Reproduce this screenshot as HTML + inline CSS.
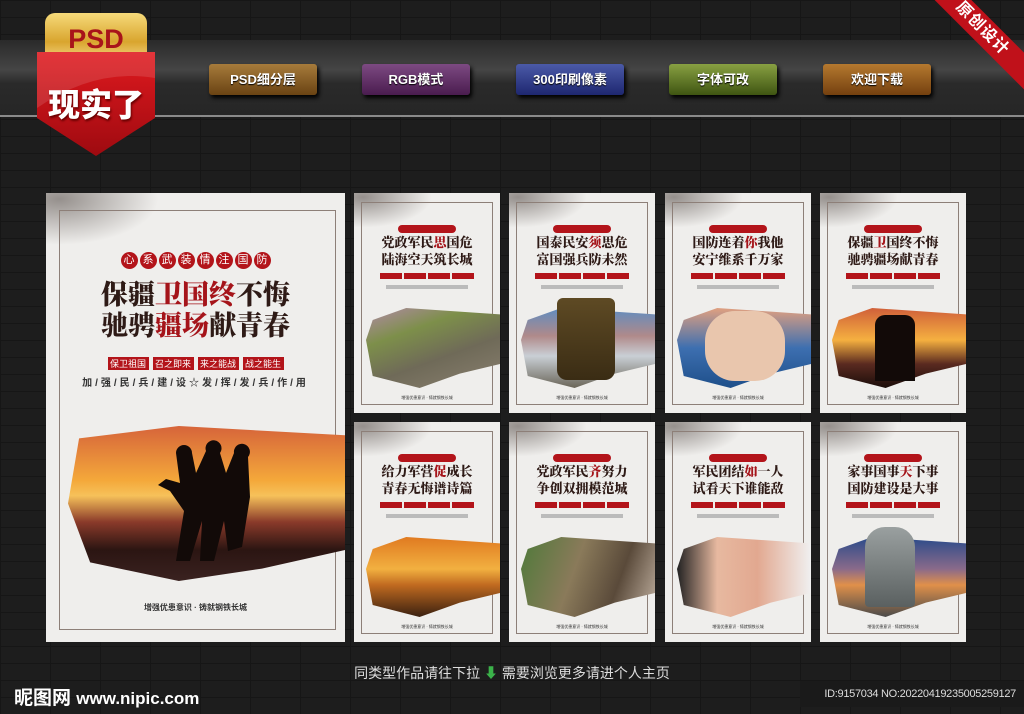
<!DOCTYPE html>
<html><head><meta charset="utf-8"><style>
*{margin:0;padding:0;box-sizing:border-box}
html,body{width:1024px;height:714px;overflow:hidden}
body{position:relative;background:#1d1d1d;font-family:"Liberation Sans","Noto Sans CJK SC",sans-serif;
background-image:linear-gradient(#161616 1px,transparent 1px),linear-gradient(90deg,#161616 1px,transparent 1px);background-size:50px 17px,50px 34px;}
.band{position:absolute;left:0;top:40px;width:1024px;height:77px;background:linear-gradient(#2a2a2a 0,#3b3b3b 25%,#454545 40%,#2a2a2a 58%,#262626 100%);border-bottom:2px solid #8a8a8a}
.btn{position:absolute;top:64px;width:108px;height:31px;border-radius:3px;color:#fff;font-size:13px;font-weight:bold;text-align:center;line-height:31px;box-shadow:2px 3px 4px #000;text-shadow:0 1px 1px #000}
.ribbon{position:absolute;right:-38px;top:16px;width:160px;height:26px;background:#c0111a;transform:rotate(45deg);color:#fff;font-weight:bold;font-size:16px;text-align:center;line-height:26px;letter-spacing:1px}
.poster{position:absolute;background:#efeeec;overflow:hidden}
.frame{position:absolute;border:1px solid #8d7f78}
.serif{font-family:"Liberation Serif","Noto Serif CJK SC",serif;font-weight:900}
.title{position:absolute;left:0;width:100%;text-align:center;color:#2e1a16}
.title b{color:#a5141a}
.circ{position:absolute;left:0;width:100%;text-align:center}
.circ span{display:inline-block;background:#b3141a;color:#fff;border-radius:50%;text-align:center}
.tags{position:absolute;left:0;width:100%;text-align:center}
.tags span{display:inline-block;background:#b3141a;color:#fff}
.img{position:absolute}
.foot{position:absolute;left:0;width:100%;text-align:center;color:#333}
.branch{position:absolute;left:0;top:0;width:90px;height:40px;background:radial-gradient(ellipse at 10% 10%,rgba(60,50,45,.5),transparent 60%)}
</style></head><body>
<div class="band"></div>
<div style="position:absolute;left:45px;top:13px;width:102px;height:48px;border-radius:10px 10px 0 0;background:linear-gradient(#f6da7a,#d9a52e 60%,#f4d683);color:#a8141a;font-weight:bold;font-size:27px;text-align:center;line-height:52px">PSD</div>
<svg style="position:absolute;left:35px;top:48px" width="122" height="110"><defs><linearGradient id="rg" x1="0" y1="0" x2="0" y2="1"><stop offset="0" stop-color="#e01a1f"/><stop offset="1" stop-color="#9e0a10"/></linearGradient></defs><path d="M2 4 H120 V70 L61 108 L2 70 Z" fill="url(#rg)"/><path d="M2 4 H120 V30 Q60 20 2 60Z" fill="#fff" opacity=".12"/></svg>
<div style="position:absolute;left:37px;top:80px;width:118px;text-align:center;color:#fff;font-weight:900;font-size:32px;text-shadow:1px 2px 2px #600">现实了</div>
<div class="btn" style="left:209px;background:linear-gradient(#a67b3b,#6a4313)">PSD细分层</div>
<div class="btn" style="left:362px;background:linear-gradient(#7d4a82,#4a1c4f)">RGB模式</div>
<div class="btn" style="left:516px;background:linear-gradient(#4b5aa8,#1e2770)">300印刷像素</div>
<div class="btn" style="left:669px;background:linear-gradient(#88a042,#3f5512)">字体可改</div>
<div class="btn" style="left:823px;background:linear-gradient(#b5792f,#74400f)">欢迎下载</div>
<div class="ribbon">原创设计</div>

<div class="poster" style="left:46px;top:193px;width:299px;height:449px">
 <div class="branch" style="width:130px;height:60px"></div>
 <div class="frame" style="left:13px;top:17px;width:277px;height:420px"></div>
 <div class="circ" style="top:57px"><span style="width:17px;height:17px;font-size:11px;line-height:17px;margin:0 1px">心</span><span style="width:17px;height:17px;font-size:11px;line-height:17px;margin:0 1px">系</span><span style="width:17px;height:17px;font-size:11px;line-height:17px;margin:0 1px">武</span><span style="width:17px;height:17px;font-size:11px;line-height:17px;margin:0 1px">装</span><span style="width:17px;height:17px;font-size:11px;line-height:17px;margin:0 1px">情</span><span style="width:17px;height:17px;font-size:11px;line-height:17px;margin:0 1px">注</span><span style="width:17px;height:17px;font-size:11px;line-height:17px;margin:0 1px">国</span><span style="width:17px;height:17px;font-size:11px;line-height:17px;margin:0 1px">防</span></div>
 <div class="title serif" style="top:87px;font-size:27px;line-height:31px">保疆<b>卫国终</b>不悔<br>驰骋<b>疆场</b>献青春</div>
 <div class="tags" style="top:164px;font-size:9px"><span style="width:41px;margin:0 2px">保卫祖国</span><span style="width:41px;margin:0 2px">召之即来</span><span style="width:41px;margin:0 2px">来之能战</span><span style="width:41px;margin:0 2px">战之能生</span></div>
 <div class="foot" style="top:181px;font-size:10px;font-weight:bold;letter-spacing:3px">加/强/民/兵/建/设☆发/挥/发/兵/作/用</div>
 <div class="img" style="left:22px;top:233px;width:277px;height:155px;background:linear-gradient(#d6643a 0,#f4a83a 35%,#f6c15a 45%,#8a3a2a 62%,#2b1512 80%,#3a2220);clip-path:polygon(4% 8%,40% 0,100% 6%,100% 80%,70% 92%,40% 100%,8% 88%,0 50%)"></div>
 <svg class="img" style="left:100px;top:240px" width="110" height="150"><path d="M30 20 a8 8 0 1 1 16 0 l4 20 l10 -22 a8 8 0 1 1 14 2 l6 20 l8-20 a8 8 0 1 1 14 4 l2 40 l-8 50 l-14 4 l-4 -30 l-10 40 h-14 l2-40 l-12 40 h-14 l8-50 l-14-20 l-12 -6 l8 -6 l14 4z" fill="#120a08"/></svg>
 <div class="foot" style="top:409px;font-size:8px;font-weight:bold">增强优患意识 · 铸就钢铁长城</div>
</div>

<div class="poster" style="left:354px;top:193px;width:146px;height:220px">
 <div class="branch"></div><div class="frame" style="left:7px;top:9px;width:132px;height:203px"></div>
 <div class="circ" style="top:27px"><span style="width:58px;height:8px;border-radius:4px"></span></div>
 <div class="title serif" style="top:41px;font-size:13px;line-height:17px">党政军民<b>思</b>国危<br>陆海空天筑长城</div>
 <div class="tags" style="top:80px;font-size:4px;line-height:6px"><span style="width:22px;margin:0 1px">&nbsp;</span><span style="width:22px;margin:0 1px">&nbsp;</span><span style="width:22px;margin:0 1px">&nbsp;</span><span style="width:22px;margin:0 1px">&nbsp;</span></div>
 <div style="position:absolute;left:32px;top:92px;width:82px;height:4px;background:#bbb"></div>
 <div class="img" style="left:12px;top:115px;width:134px;height:80px;background:linear-gradient(160deg,#b28aa8 0,#7d8f4a 30%,#6f6a58 60%,#8a8070);clip-path:polygon(5% 15%,30% 0,100% 8%,100% 70%,70% 82%,40% 100%,5% 85%,0 40%)"></div>
 <div class="foot" style="top:202px;font-size:4px">增强优患意识 · 铸就钢铁长城</div>
</div>
<div class="poster" style="left:509px;top:193px;width:146px;height:220px">
 <div class="branch"></div><div class="frame" style="left:7px;top:9px;width:132px;height:203px"></div>
 <div class="circ" style="top:27px"><span style="width:58px;height:8px;border-radius:4px"></span></div>
 <div class="title serif" style="top:41px;font-size:13px;line-height:17px">国泰民安<b>须</b>思危<br>富国强兵防未然</div>
 <div class="tags" style="top:80px;font-size:4px;line-height:6px"><span style="width:22px;margin:0 1px">&nbsp;</span><span style="width:22px;margin:0 1px">&nbsp;</span><span style="width:22px;margin:0 1px">&nbsp;</span><span style="width:22px;margin:0 1px">&nbsp;</span></div>
 <div style="position:absolute;left:32px;top:92px;width:82px;height:4px;background:#bbb"></div>
 <div class="img" style="left:12px;top:115px;width:134px;height:80px;background:linear-gradient(#5f8cc0 0,#b08a8a 35%,#c9cfd5 60%,#6a6558);clip-path:polygon(5% 15%,30% 0,100% 8%,100% 70%,70% 82%,40% 100%,5% 85%,0 40%)"></div>
 <div style="position:absolute;left:48px;top:105px;width:58px;height:82px;background:linear-gradient(#5e4a24,#3a2c14);border-radius:6px 6px 10px 10px"></div>
 <div class="foot" style="top:202px;font-size:4px">增强优患意识 · 铸就钢铁长城</div>
</div>
<div class="poster" style="left:665px;top:193px;width:146px;height:220px">
 <div class="branch"></div><div class="frame" style="left:7px;top:9px;width:132px;height:203px"></div>
 <div class="circ" style="top:27px"><span style="width:58px;height:8px;border-radius:4px"></span></div>
 <div class="title serif" style="top:41px;font-size:13px;line-height:17px">国防连着<b>你</b>我他<br>安宁维系千万家</div>
 <div class="tags" style="top:80px;font-size:4px;line-height:6px"><span style="width:22px;margin:0 1px">&nbsp;</span><span style="width:22px;margin:0 1px">&nbsp;</span><span style="width:22px;margin:0 1px">&nbsp;</span><span style="width:22px;margin:0 1px">&nbsp;</span></div>
 <div style="position:absolute;left:32px;top:92px;width:82px;height:4px;background:#bbb"></div>
 <div class="img" style="left:12px;top:115px;width:134px;height:80px;background:linear-gradient(#e0a080 0,#3d6fb0 50%,#1e4f8a);clip-path:polygon(5% 15%,30% 0,100% 8%,100% 70%,70% 82%,40% 100%,5% 85%,0 40%)"></div>
 <div style="position:absolute;left:40px;top:118px;width:80px;height:70px;background:#e9c6ad;border-radius:30px"></div>
 <div class="foot" style="top:202px;font-size:4px">增强优患意识 · 铸就钢铁长城</div>
</div>
<div class="poster" style="left:820px;top:193px;width:146px;height:220px">
 <div class="branch"></div><div class="frame" style="left:7px;top:9px;width:132px;height:203px"></div>
 <div class="circ" style="top:27px"><span style="width:58px;height:8px;border-radius:4px"></span></div>
 <div class="title serif" style="top:41px;font-size:13px;line-height:17px">保疆<b>卫</b>国终不悔<br>驰骋疆场献青春</div>
 <div class="tags" style="top:80px;font-size:4px;line-height:6px"><span style="width:22px;margin:0 1px">&nbsp;</span><span style="width:22px;margin:0 1px">&nbsp;</span><span style="width:22px;margin:0 1px">&nbsp;</span><span style="width:22px;margin:0 1px">&nbsp;</span></div>
 <div style="position:absolute;left:32px;top:92px;width:82px;height:4px;background:#bbb"></div>
 <div class="img" style="left:12px;top:115px;width:134px;height:80px;background:linear-gradient(#d0603a 0,#f5b040 40%,#5a2a20 70%,#1a0d0a);clip-path:polygon(5% 15%,30% 0,100% 8%,100% 70%,70% 82%,40% 100%,5% 85%,0 40%)"></div>
 <div style="position:absolute;left:55px;top:122px;width:40px;height:66px;background:#120a08;border-radius:10px 10px 0 0"></div>
 <div class="foot" style="top:202px;font-size:4px">增强优患意识 · 铸就钢铁长城</div>
</div>
<div class="poster" style="left:354px;top:422px;width:146px;height:220px">
 <div class="branch"></div><div class="frame" style="left:7px;top:9px;width:132px;height:203px"></div>
 <div class="circ" style="top:27px"><span style="width:58px;height:8px;border-radius:4px"></span></div>
 <div class="title serif" style="top:41px;font-size:13px;line-height:17px">给力军营<b>促</b>成长<br>青春无悔谱诗篇</div>
 <div class="tags" style="top:80px;font-size:4px;line-height:6px"><span style="width:22px;margin:0 1px">&nbsp;</span><span style="width:22px;margin:0 1px">&nbsp;</span><span style="width:22px;margin:0 1px">&nbsp;</span><span style="width:22px;margin:0 1px">&nbsp;</span></div>
 <div style="position:absolute;left:32px;top:92px;width:82px;height:4px;background:#bbb"></div>
 <div class="img" style="left:12px;top:115px;width:134px;height:80px;background:linear-gradient(#e07a20 0,#f2b040 40%,#c06a20 60%,#3a2010);clip-path:polygon(5% 15%,30% 0,100% 8%,100% 70%,70% 82%,40% 100%,5% 85%,0 40%)"></div>
 <div class="foot" style="top:202px;font-size:4px">增强优患意识 · 铸就钢铁长城</div>
</div>
<div class="poster" style="left:509px;top:422px;width:146px;height:220px">
 <div class="branch"></div><div class="frame" style="left:7px;top:9px;width:132px;height:203px"></div>
 <div class="circ" style="top:27px"><span style="width:58px;height:8px;border-radius:4px"></span></div>
 <div class="title serif" style="top:41px;font-size:13px;line-height:17px">党政军民<b>齐</b>努力<br>争创双拥模范城</div>
 <div class="tags" style="top:80px;font-size:4px;line-height:6px"><span style="width:22px;margin:0 1px">&nbsp;</span><span style="width:22px;margin:0 1px">&nbsp;</span><span style="width:22px;margin:0 1px">&nbsp;</span><span style="width:22px;margin:0 1px">&nbsp;</span></div>
 <div style="position:absolute;left:32px;top:92px;width:82px;height:4px;background:#bbb"></div>
 <div class="img" style="left:12px;top:115px;width:134px;height:80px;background:linear-gradient(110deg,#4f7a3a 0,#8a7a5a 40%,#5a4a3a 70%,#c0b0a0);clip-path:polygon(5% 15%,30% 0,100% 8%,100% 70%,70% 82%,40% 100%,5% 85%,0 40%)"></div>
 <div class="foot" style="top:202px;font-size:4px">增强优患意识 · 铸就钢铁长城</div>
</div>
<div class="poster" style="left:665px;top:422px;width:146px;height:220px">
 <div class="branch"></div><div class="frame" style="left:7px;top:9px;width:132px;height:203px"></div>
 <div class="circ" style="top:27px"><span style="width:58px;height:8px;border-radius:4px"></span></div>
 <div class="title serif" style="top:41px;font-size:13px;line-height:17px">军民团结<b>如</b>一人<br>试看天下谁能敌</div>
 <div class="tags" style="top:80px;font-size:4px;line-height:6px"><span style="width:22px;margin:0 1px">&nbsp;</span><span style="width:22px;margin:0 1px">&nbsp;</span><span style="width:22px;margin:0 1px">&nbsp;</span><span style="width:22px;margin:0 1px">&nbsp;</span></div>
 <div style="position:absolute;left:32px;top:92px;width:82px;height:4px;background:#bbb"></div>
 <div class="img" style="left:12px;top:115px;width:134px;height:80px;background:linear-gradient(90deg,#222 0,#e7b9a0 30%,#e2a890 60%,#f0f0f0);clip-path:polygon(5% 15%,30% 0,100% 8%,100% 70%,70% 82%,40% 100%,5% 85%,0 40%)"></div>
 <div class="foot" style="top:202px;font-size:4px">增强优患意识 · 铸就钢铁长城</div>
</div>
<div class="poster" style="left:820px;top:422px;width:146px;height:220px">
 <div class="branch"></div><div class="frame" style="left:7px;top:9px;width:132px;height:203px"></div>
 <div class="circ" style="top:27px"><span style="width:58px;height:8px;border-radius:4px"></span></div>
 <div class="title serif" style="top:41px;font-size:13px;line-height:17px">家事国事<b>天</b>下事<br>国防建设是大事</div>
 <div class="tags" style="top:80px;font-size:4px;line-height:6px"><span style="width:22px;margin:0 1px">&nbsp;</span><span style="width:22px;margin:0 1px">&nbsp;</span><span style="width:22px;margin:0 1px">&nbsp;</span><span style="width:22px;margin:0 1px">&nbsp;</span></div>
 <div style="position:absolute;left:32px;top:92px;width:82px;height:4px;background:#bbb"></div>
 <div class="img" style="left:12px;top:115px;width:134px;height:80px;background:linear-gradient(#2a4a8a 0,#8a6a8a 40%,#e0904a 60%,#4a4a4a);clip-path:polygon(5% 15%,30% 0,100% 8%,100% 70%,70% 82%,40% 100%,5% 85%,0 40%)"></div>
 <div style="position:absolute;left:45px;top:105px;width:50px;height:80px;background:linear-gradient(#9aa0a0,#5a6060);border-radius:20px 20px 4px 4px"></div>
 <div class="foot" style="top:202px;font-size:4px">增强优患意识 · 铸就钢铁长城</div>
</div>

<div style="position:absolute;left:0;top:663px;width:1024px;text-align:center;color:#ddd;font-size:14px">同类型作品请往下拉 <span style="color:#3bb34a;font-weight:bold">⬇</span> 需要浏览更多请进个人主页</div>
<div style="position:absolute;left:14px;top:683px;color:#fff;font-size:19px;font-weight:bold;white-space:nowrap">昵图网 <span style="font-size:17px">www.nipic.com</span></div>
<div style="position:absolute;left:800px;top:681px;width:224px;height:26px;background:#1a1a1a;color:#ddd;font-size:11px;line-height:26px;text-align:right;padding-right:8px;white-space:nowrap;letter-spacing:-0.3px">ID:9157034 NO:20220419235005259127</div>
</body></html>
